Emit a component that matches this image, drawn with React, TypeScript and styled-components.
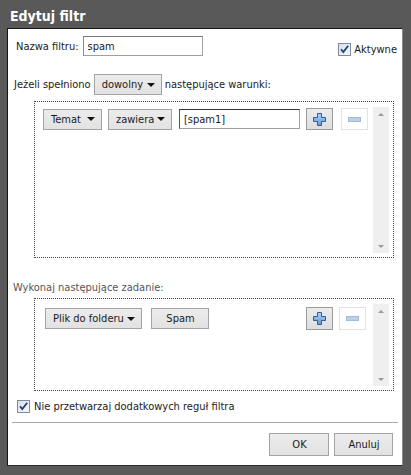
import React from "react";
import styled, { createGlobalStyle } from "styled-components";

const FONT = `"DejaVu Sans Condensed", "DejaVu Sans", "Liberation Sans", sans-serif`;

const GlobalStyle = createGlobalStyle`
  html, body { margin: 0; padding: 0; background: #595959; }
  body {
    width: 411px; height: 475px; overflow: hidden;
    font-family: ${FONT}; font-stretch: condensed; font-size: 11px; color: #1a1a1a;
  }
  * { box-sizing: border-box; }
`;

const Frame = styled.div`
  width: 411px;
  height: 475px;
  background: #595959;
  display: flex;
  flex-direction: column;
  padding: 0 8px 9px 7px;
`;

const TitleBar = styled.div`
  height: 28px;
  flex: none;
  padding: 8px 0 0 3px;
  font-weight: bold;
  font-size: 14px;
  line-height: 16px;
  color: #ffffff;
`;

const Panel = styled.div`
  flex: 1;
  background: #ffffff;
  border-top: 1px solid #151515;
  border-left: 1px solid #151515;
  border-right: 1px solid #8a8a8a;
  border-bottom: 1px solid #2a2a2a;
  display: flex;
  flex-direction: column;
  padding-top: 7px;
`;

const Row = styled.div<{ $mt: number; $pl: number; $h: number }>`
  display: flex;
  align-items: center;
  height: ${(p) => p.$h}px;
  margin-top: ${(p) => p.$mt}px;
  padding-left: ${(p) => p.$pl}px;
  padding-right: 5px;
  flex: none;
`;

const Label = styled.span<{ $gap?: number; $muted?: boolean }>`
  white-space: nowrap;
  margin-right: ${(p) => p.$gap ?? 0}px;
  color: ${(p) => (p.$muted ? "#555555" : "#1a1a1a")};
`;

const TextField = styled.input<{ $w: number; $dark?: boolean }>`
  width: ${(p) => p.$w}px;
  height: 20px;
  padding: 0 4px;
  margin: 0;
  font-family: ${FONT};
  font-stretch: condensed;
  font-size: 11px;
  color: #1a1a1a;
  background: #ffffff;
  border: 1px solid #a0a0a0;
  border-top-color: ${(p) => (p.$dark ? "#333333" : "#777777")};
  border-left-color: ${(p) => (p.$dark ? "#555555" : "#8a8a8a")};
  outline: none;
`;

const CheckGroup = styled.label`
  margin-left: auto;
  margin-top: 6px;
  display: flex;
  align-items: center;
  gap: 3px;
`;

const PlainCheck = styled.label<{ $mt?: number }>`
  display: flex;
  align-items: center;
  gap: 4px;
`;

const Btn = styled.button<{ $w: number; $h?: number; $center?: boolean; $ml?: number }>`
  width: ${(p) => p.$w}px;
  height: ${(p) => p.$h ?? 21}px;
  margin: 0 0 0 ${(p) => p.$ml ?? 0}px;
  padding: 0 6px 0 7px;
  display: flex;
  align-items: center;
  justify-content: ${(p) => (p.$center ? "center" : "space-between")};
  font-family: ${FONT};
  font-stretch: condensed;
  font-size: 11px;
  color: #1a1a1a;
  background: linear-gradient(#ececec, #e2e2e2);
  border: 1px solid #a3a3a3;
  border-radius: 0;
  flex: none;
`;

const Arrow = styled.span`
  width: 0;
  height: 0;
  border-left: 4px solid transparent;
  border-right: 4px solid transparent;
  border-top: 4px solid #111111;
`;

const RuleBox = styled.div<{ $mt: number; $h: number; $pad: string }>`
  margin: ${(p) => p.$mt}px 8px 0 26px;
  height: ${(p) => p.$h}px;
  border: 1px dotted #444444;
  display: flex;
  padding: ${(p) => p.$pad};
  flex: none;
`;

const Controls = styled.div<{ $mt: number }>`
  flex: 1;
  display: flex;
  align-items: center;
  align-self: flex-start;
  margin-top: ${(p) => p.$mt}px;
`;

const IconBtn = styled.div<{ $disabled?: boolean; $ml: number; $h: number }>`
  width: 27px;
  height: ${(p) => p.$h}px;
  margin-left: ${(p) => p.$ml}px;
  display: flex;
  align-items: center;
  justify-content: center;
  background: ${(p) => (p.$disabled ? "#ffffff" : "linear-gradient(#ebebeb, #dedede)")};
  border: 1px solid ${(p) => (p.$disabled ? "#e2e2e2" : "#9a9a9a")};
  flex: none;
`;

const ScrollBar = styled.div`
  width: 16px;
  margin-left: 4px;
  background: #efefef;
  display: flex;
  flex-direction: column;
  justify-content: space-between;
  align-items: center;
  padding: 6px 0 5px;
  flex: none;
`;

const ScrollUp = styled.span`
  width: 0;
  height: 0;
  border-left: 3px solid transparent;
  border-right: 3px solid transparent;
  border-bottom: 3px solid #9a9a9a;
`;

const ScrollDown = styled.span`
  width: 0;
  height: 0;
  border-left: 3px solid transparent;
  border-right: 3px solid transparent;
  border-top: 3px solid #9a9a9a;
`;

const Separator = styled.div`
  height: 1px;
  margin: 8px 4px 0 4px;
  background: #a8a8a8;
  flex: none;
`;

const Footer = styled.div`
  display: flex;
  justify-content: flex-end;
  gap: 5px;
  margin-top: 10px;
  padding-right: 9px;
`;

const Checkbox = () => (
  <svg width="13" height="13" viewBox="0 0 13 13">
    <defs>
      <linearGradient id="cbg" x1="0" y1="0" x2="1" y2="1">
        <stop offset="0" stopColor="#d9e0ea" />
        <stop offset="1" stopColor="#f7f8fa" />
      </linearGradient>
    </defs>
    <rect x="0.5" y="0.5" width="12" height="12" fill="url(#cbg)" stroke="#7c8ca3" />
    <path d="M3 6.2 L5.3 9 L10.2 2.8" fill="none" stroke="#233f7c" strokeWidth="1.8" />
  </svg>
);

const PlusIcon = () => (
  <svg width="13" height="13" viewBox="0 0 13 13">
    <defs>
      <linearGradient id="plg" x1="0" y1="0" x2="0" y2="1">
        <stop offset="0" stopColor="#b4d3f5" />
        <stop offset="1" stopColor="#5f98dc" />
      </linearGradient>
    </defs>
    <path
      d="M4.5 0.5h4v4h4v4h-4v4h-4v-4h-4v-4h4z"
      fill="url(#plg)"
      stroke="#2f5e9e"
    />
  </svg>
);

const MinusIcon = () => (
  <svg width="13" height="5" viewBox="0 0 13 5">
    <rect x="0.5" y="0.5" width="12" height="4" fill="#bcd0e6" stroke="#a3bbd6" />
  </svg>
);

export default function App() {
  return (
    <>
      <GlobalStyle />
      <Frame>
        <TitleBar>Edytuj filtr</TitleBar>
        <Panel>
          <Row $mt={0} $pl={8} $h={20}>
            <Label $gap={4}>Nazwa filtru:</Label>
            <TextField $w={120} defaultValue="spam" readOnly />
            <CheckGroup>
              <Checkbox />
              <Label>Aktywne</Label>
            </CheckGroup>
          </Row>

          <Row $mt={18} $pl={6} $h={21}>
            <Label $gap={3}>Jeżeli spełniono</Label>
            <Btn $w={68} style={{ marginRight: 3 }}>
              dowolny <Arrow />
            </Btn>
            <Label>następujące warunki:</Label>
          </Row>

          <RuleBox $mt={6} $h={157} $pad="5px 4px 4px 8px">
            <Controls $mt={1}>
              <Btn $w={59}>
                Temat <Arrow />
              </Btn>
              <Btn $w={64} $ml={6}>
                zawiera <Arrow />
              </Btn>
              <TextField $w={121} $dark defaultValue="[spam1]" readOnly style={{ marginLeft: 7 }} />
              <IconBtn $ml={6} $h={22}>
                <PlusIcon />
              </IconBtn>
              <IconBtn $ml={8} $h={22} $disabled>
                <MinusIcon />
              </IconBtn>
            </Controls>
            <ScrollBar>
              <ScrollUp />
              <ScrollDown />
            </ScrollBar>
          </RuleBox>

          <Row $mt={22} $pl={5} $h={14}>
            <Label $muted>Wykonaj następujące zadanie:</Label>
          </Row>

          <RuleBox $mt={4} $h={93} $pad="5px 4px 4px 10px">
            <Controls $mt={3}>
              <Btn $w={97}>
                Plik do folderu <Arrow />
              </Btn>
              <Btn $w={58} $ml={9} $center>
                Spam
              </Btn>
              <IconBtn $ml={97} $h={23}>
                <PlusIcon />
              </IconBtn>
              <IconBtn $ml={6} $h={23} $disabled>
                <MinusIcon />
              </IconBtn>
            </Controls>
            <ScrollBar>
              <ScrollUp />
              <ScrollDown />
            </ScrollBar>
          </RuleBox>

          <Row $mt={8} $pl={9} $h={15}>
            <PlainCheck>
              <Checkbox />
              <Label>Nie przetwarzaj dodatkowych reguł filtra</Label>
            </PlainCheck>
          </Row>

          <Separator />

          <Footer>
            <Btn $w={60} $h={23} $center>
              OK
            </Btn>
            <Btn $w={59} $h={23} $center>
              Anuluj
            </Btn>
          </Footer>
        </Panel>
      </Frame>
    </>
  );
}
